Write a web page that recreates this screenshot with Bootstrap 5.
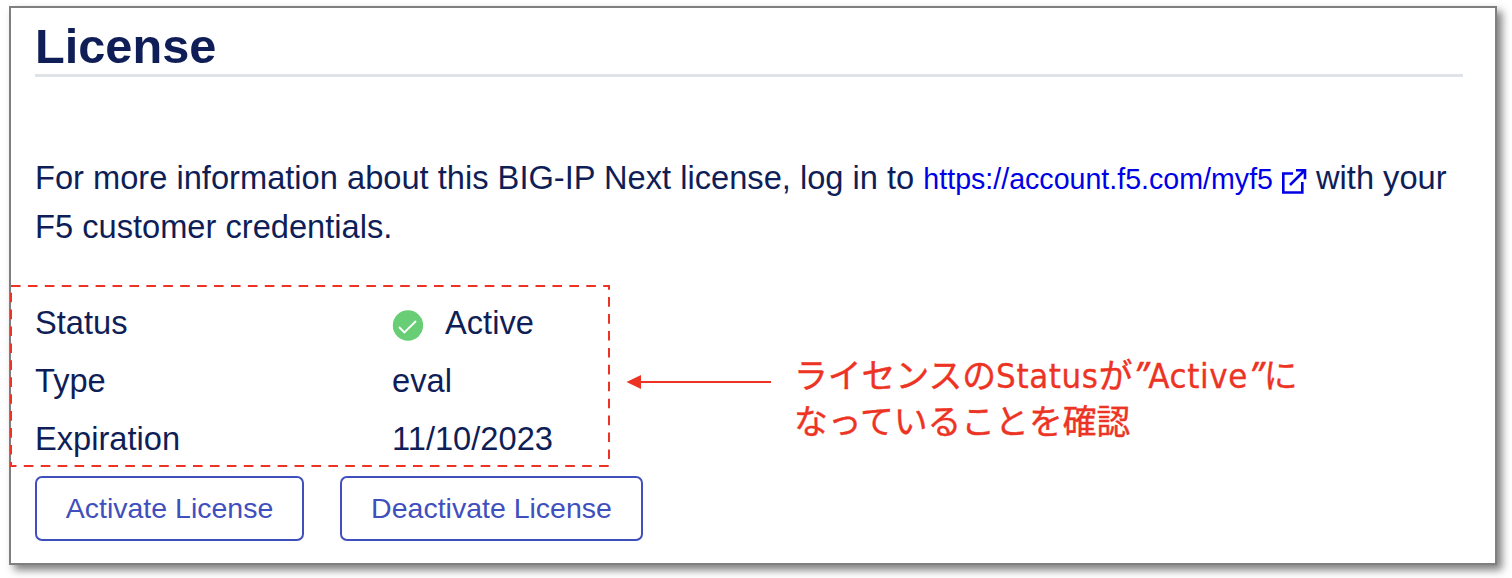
<!DOCTYPE html>
<html lang="ja">
<head>
<meta charset="utf-8">
<title>License</title>
<link href="https://cdn.jsdelivr.net/npm/bootstrap@5.3.0/dist/css/bootstrap.min.css" rel="stylesheet">
<style>
body{background:#fff;color:#0f1e57;font-family:"Liberation Sans",Arial,sans-serif;font-size:32.65px;min-height:578px;overflow:hidden;display:flow-root}
.panel{width:1488px;height:559px;margin:6px 0 0 9px;border:2px solid #7f7f7f;background:#fff;box-shadow:5px 5px 8px rgba(0,0,0,.5);padding:0 32px 0 24px}
.title{font-size:48.7px;line-height:56px;padding-top:10px;height:69px;border-bottom:3px solid #dfe3e8;margin:0 0 76px}
.intro{line-height:49px;height:98px;margin:0 -12px 44px 0;white-space:nowrap}
.intro a{font-size:28.6px;line-height:1;color:#0000e6}
.intro svg{margin:-6px 0 -2px;vertical-align:-3px}
.facts{grid-template-columns:357px auto;grid-auto-rows:57.7px;height:181px}
.btn-license{--bs-btn-color:#3f4fbd;--bs-btn-border-color:#3f4fbd;--bs-btn-border-width:2px;--bs-btn-border-radius:7px;--bs-btn-font-size:28.5px;height:65px;line-height:1;padding:0}
.callout{left:10px;top:285px}
.note{left:794px;top:352px;color:#ed3424;font:33.8px/46px "Noto Sans","Noto Sans CJK JP",sans-serif;white-space:nowrap;-webkit-text-stroke:.4px #ed3424}
.note .latin{font-family:"DejaVu Sans Condensed","DejaVu Sans",sans-serif;font-stretch:condensed;font-size:34.5px;line-height:1;letter-spacing:.6px;-webkit-text-stroke:.3px #ed3424}
.note .quote{font-style:italic;font-size:36px;line-height:1;padding:0 1px 0 2px}
</style>
</head>
<body>
<main class="panel">
  <h1 class="title fw-bold">License</h1>
  <p class="intro">For more information about this BIG-IP Next license, log in to <a href="#" class="text-decoration-none">https://account.f5.com/myf5 <svg width="26" height="26" viewBox="0 0 26 26" fill="none" stroke="currentColor" stroke-width="2.6"><path d="M12 5.5H2.3v19h19V14M9 17 23 3M15 2.2h9v9"/></svg></a> with your<br>F5 customer credentials.</p>
  <div class="facts d-grid align-items-center">
    <span>Status</span>
    <span class="d-flex align-items-center"><svg class="me-3 mt-1" width="31" height="31" viewBox="0 0 31 31"><circle cx="16" cy="15.5" r="15.2" fill="#68ce75"/><path d="m7 17 5.4 5.5L24 11" fill="none" stroke="#fff" stroke-width="1.8"/></svg><span style="padding-left:6px">Active</span></span>
    <span>Type</span><span>eval</span>
    <span>Expiration</span><span>11/10/2023</span>
  </div>
  <div class="d-flex" style="gap:36px">
    <button class="btn btn-license" style="width:269px">Activate License</button>
    <button class="btn btn-license" style="width:303px">Deactivate License</button>
  </div>
</main>
<svg class="callout position-absolute" width="765" height="184" fill="none" stroke="#ed3424" stroke-width="2"><path d="M1 1H599V181H1Z" stroke-dasharray="9.6 7.32"/><path d="M629 97H761"/><path d="M616.5 97 631 90v14z" fill="#ed3424" stroke="none"/></svg>
<div class="note position-absolute">ライセンスの<span class="latin">Status</span>が<span class="quote">”</span><span class="latin">Active</span><span class="quote">”</span>に<br>なっていることを確認</div>
<script src="https://cdn.jsdelivr.net/npm/bootstrap@5.3.0/dist/js/bootstrap.bundle.min.js"></script>
</body>
</html>
